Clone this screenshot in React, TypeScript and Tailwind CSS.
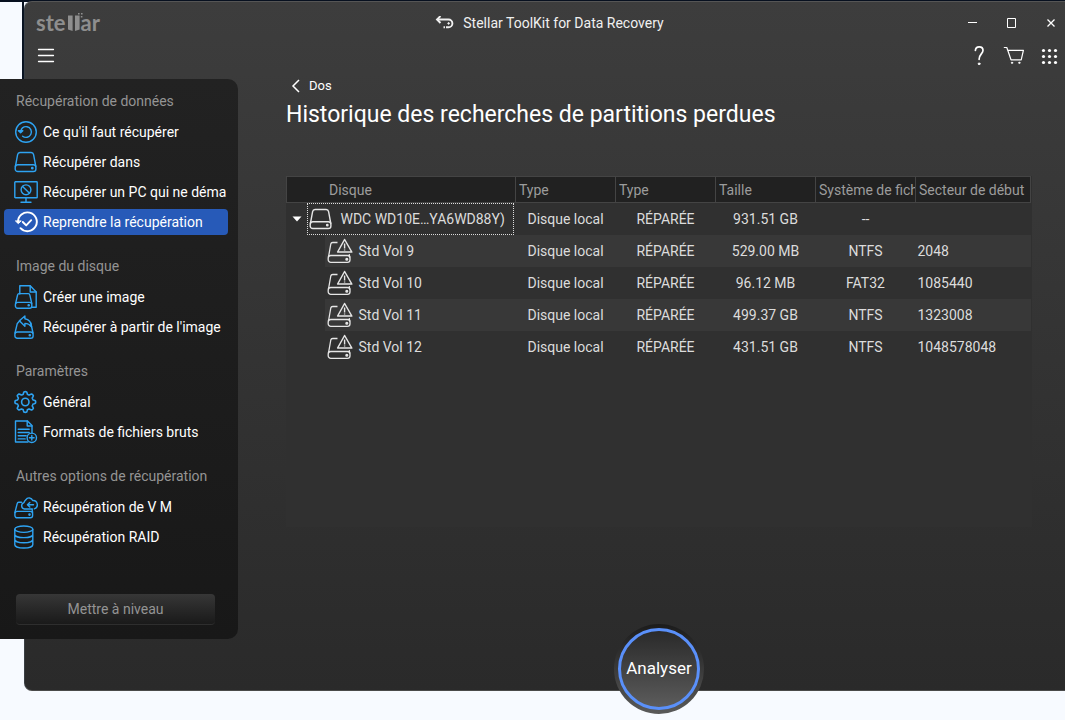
import React from "react";

type IconProps = { children: React.ReactNode; className?: string };

function Icon({ children, className = "text-[#2ea3f2]" }: IconProps) {
  return (
    <svg
      viewBox="0 0 24 24"
      className={`size-6 shrink-0 ${className}`}
      fill="none"
      stroke="currentColor"
      strokeWidth="1.4"
      strokeLinecap="round"
      strokeLinejoin="round"
      aria-hidden="true"
    >
      {children}
    </svg>
  );
}

const RestoreIcon = () => (
  <Icon>
    <circle cx="12" cy="12" r="10.3" />
    <path d="M6.6 12.2a5.4 5.4 0 1 1 2 4" />
    <path d="M4.4 10.8l2.2 2 2.2-2z" fill="currentColor" />
  </Icon>
);

const DriveIcon = ({ className }: { className?: string }) => (
  <Icon className={className}>
    <path d="M1.4 16.500L3.600 4.600Q4 2.500 6 2.500h11.200Q19.200 2.500 19.600 4.600L21.800 16.500" />
    <rect x="1.200" y="14.800" width="20.700" height="6.700" rx="2.600" />
    <circle cx="18.300" cy="18.200" r="0.700" fill="currentColor" />
  </Icon>
);

const MonitorIcon = () => (
  <Icon>
    <rect x="0.8" y="1.8" width="22.4" height="16" rx="0.6" />
    <circle cx="12" cy="9.800" r="4.900" />
    <path d="M8.600 6.400l6.900 6.900M12 17.800v4M7 22.200h10" />
  </Icon>
);

const ResumeIcon = () => (
  <Icon className="text-white">
    <g strokeWidth="1.9">
      <path d="M4 12.200a9.400 9.400 0 1 1 2.500 6" />
      <path d="M8.800 12l3.400 3.400 5-5.200" />
      <path d="M1.700 11.200l2.600 2.400 2.600-2.400z" fill="currentColor" strokeWidth="1" />
    </g>
  </Icon>
);

const CreateImageIcon = () => (
  <Icon>
    <path d="M5.800 9V0.800h10.400l6 6.200v15.200h-4.400" />
    <path d="M16.200 1v6h6" />
    <path d="M1.600 18.500L3.600 9.800Q3.900 8.600 5 8.600h9.400Q15.500 8.600 15.800 9.800L17.800 18.500" />
    <rect x="1.400" y="17.400" width="16.400" height="5.800" rx="2.200" />
    <circle cx="14.700" cy="20.300" r="0.600" fill="currentColor" />
  </Icon>
);

const RestoreImageIcon = () => (
  <Icon>
    <path d="M6 5.600L3.300 8.400 1 18M16.800 8l2.200 10" />
    <rect x="0.900" y="17" width="18.200" height="6.200" rx="2.300" />
    <path d="M5.400 5.800L10.900 1v2.800c4 .6 6.300 3.400 6.600 8-1.700-2.200-3.800-3.300-6.600-3.400v2.800z" />
    <circle cx="15.800" cy="20.200" r="0.600" fill="currentColor" />
  </Icon>
);

// Outline of an eight-toothed gear with rounded teeth.
const gearOutline =
  Array.from({ length: 96 }, (_, i) => {
    const angle = (i / 96) * Math.PI * 2;
    const radius = 9.1 + 1.25 * Math.tanh(2.6 * Math.cos(8 * angle));
    const x = 11.3 + radius * Math.cos(angle);
    const y = 12 + radius * Math.sin(angle);
    return `${i === 0 ? "M" : "L"}${x.toFixed(2)} ${y.toFixed(2)}`;
  }).join("") + "Z";

const GearIcon = () => (
  <Icon>
    <circle cx="11.300" cy="12" r="3.700" strokeWidth="1.600" />
    <path d={gearOutline} strokeWidth="1.600" />
  </Icon>
);

const RawFormatsIcon = () => (
  <Icon>
    <path d="M14 22H1.500V1h12l4.500 4.600V13" />
    <path d="M13.200 1v5H18M4.200 9.300h11M4.200 12.500h11M4.200 15.700h8M4.200 18.900h7" />
    <circle cx="17.800" cy="17.800" r="4.700" />
    <path d="M17.800 15.500v4.600M15.500 17.800h4.600" />
  </Icon>
);

const VmIcon = () => (
  <Icon>
    <path d="M7.500 7.300H4.600Q3.500 7.300 3.200 8.600L.9 17.500M18 14.400l.6 2.800" />
    <rect x="0.900" y="16.400" width="17.700" height="6.400" rx="2.200" />
    <path d="M18.300 14H10.400a3.300 3.300 0 0 1-.4-6.400 4.300 4.300 0 0 1 1.800-2.800 3.800 3.800 0 0 1 6.900.8 4.200 4.200 0 0 1 1.600 8.200" />
    <path d="M19.500 9.800h-6M15.800 7.500l-2.400 2.300 2.400 2.300" />
    <circle cx="15.500" cy="19.600" r="0.600" fill="currentColor" />
  </Icon>
);

const RaidIcon = () => (
  <Icon>
    <ellipse cx="9.800" cy="4.200" rx="9" ry="3.200" />
    <path d="M.8 4.200v15.600c0 1.800 4 3.200 9 3.200s9-1.400 9-3.200V4.200M.8 9.400c0 1.800 4 3.200 9 3.200s9-1.400 9-3.200M.8 14.600c0 1.800 4 3.200 9 3.200s9-1.400 9-3.200" />
  </Icon>
);

const VolumeIcon = () => (
  <svg
    viewBox="0 0 26 26"
    className="size-[26px] shrink-0 text-[#e6e6e6]"
    fill="none"
    stroke="currentColor"
    strokeWidth="1.300"
    strokeLinejoin="round"
    aria-hidden="true"
  >
    <path d="M10.500 4.500H5.700Q4.100 4.500 3.800 6L1.500 19M22.200 16.200l.6 3.300" />
    <rect x="1.200" y="17.500" width="21.800" height="6.800" rx="2.600" />
    <path d="M17.600 1.500L24.800 14H10.600z" strokeWidth="1.500" />
    <path d="M17.600 5.500v5M17.600 11.500v1" strokeWidth="1.400" />
    <circle cx="19.800" cy="21.200" r="0.900" fill="currentColor" />
  </svg>
);

type Section = {
  title: string;
  items: { label: string; icon: React.ReactNode; active?: boolean }[];
};

const sections: Section[] = [
  {
    title: "Récupération de données",
    items: [
      { label: "Ce qu'il faut récupérer", icon: <RestoreIcon /> },
      { label: "Récupérer dans", icon: <DriveIcon /> },
      { label: "Récupérer un PC qui ne déma", icon: <MonitorIcon /> },
      { label: "Reprendre la récupération", icon: <ResumeIcon />, active: true },
    ],
  },
  {
    title: "Image du disque",
    items: [
      { label: "Créer une image", icon: <CreateImageIcon /> },
      { label: "Récupérer à partir de l'image", icon: <RestoreImageIcon /> },
    ],
  },
  {
    title: "Paramètres",
    items: [
      { label: "Général", icon: <GearIcon /> },
      { label: "Formats de fichiers bruts", icon: <RawFormatsIcon /> },
    ],
  },
  {
    title: "Autres options de récupération",
    items: [
      { label: "Récupération de V M", icon: <VmIcon /> },
      { label: "Récupération RAID", icon: <RaidIcon /> },
    ],
  },
];

const columns = ["Type", "Type", "Taille", "Système de fich", "Secteur de début"];

const volumes = [
  { name: "Std Vol 9", size: "529.00 MB", fs: "NTFS", sector: "2048" },
  { name: "Std Vol 10", size: "96.12 MB", fs: "FAT32", sector: "1085440" },
  { name: "Std Vol 11", size: "499.37 GB", fs: "NTFS", sector: "1323008" },
  { name: "Std Vol 12", size: "431.51 GB", fs: "NTFS", sector: "1048578048" },
];

function Logo() {
  return (
    <div
      role="img"
      aria-label="stellar"
      className="flex items-baseline justify-self-start font-['Lato',sans-serif] text-[22px] leading-6 font-bold text-[#8e8e8e]"
    >
      <span>ste</span>
      <svg viewBox="0 0 16 18" className="ml-px h-[18px] w-4" fill="currentColor" aria-hidden="true">
        <path d="M1 2.500h4.600V18L1 16.500zM8 2.500h4.600V16.500L8 18z" />
        <path d="M11 0h1.600v1.600H11zM14 0h1.600v1.600H14zM13.800 3h1.600v1.600h-1.600z" />
      </svg>
      <span className="-ml-[2px]">ar</span>
    </div>
  );
}

function TitleBar() {
  return (
    <header className="grid h-[42px] grid-cols-[1fr_auto_1fr] items-center pr-[2px] pl-[11px]">
      <Logo />
      <div className="flex items-center gap-[9px] text-sm text-[#f0f0f0]">
        <svg viewBox="0 0 19 14" className="h-[14px] w-[19px]" fill="none" stroke="currentColor" strokeWidth="1.900" aria-hidden="true">
          <path d="M2 3.500h11.500a3.900 3.900 0 0 1 0 7.800H11" />
          <path d="M5.500 0L2 3.500 5.500 7" />
          <circle cx="13.600" cy="7.400" r="0.800" fill="currentColor" strokeWidth="1" />
          <path d="M8.500 11.300h1.500" />
        </svg>
        <span>Stellar ToolKit for Data Recovery</span>
      </div>
      <div className="flex gap-[15px] justify-self-end text-white">
        <button type="button" aria-label="Réduire" className="grid size-6 place-items-center">
          <svg viewBox="0 0 10 10" className="size-[10px]" stroke="currentColor" aria-hidden="true"><path d="M0 4.500h9" /></svg>
        </button>
        <button type="button" aria-label="Agrandir" className="grid size-6 place-items-center">
          <svg viewBox="0 0 10 10" className="size-[10px]" fill="none" stroke="currentColor" aria-hidden="true"><path d="M.5.500h8v9h-8z" /></svg>
        </button>
        <button type="button" aria-label="Fermer" className="grid size-6 place-items-center">
          <svg viewBox="0 0 10 10" className="size-[10px]" stroke="currentColor" strokeWidth="1.300" aria-hidden="true"><path d="M1.500 1.500l7 7M8.500 1.500l-7 7" /></svg>
        </button>
      </div>
    </header>
  );
}

function Toolbar() {
  return (
    <div className="flex h-6 items-center justify-between pr-1 pl-[9px] text-white">
      <button type="button" aria-label="Menu" className="size-6">
        <Icon className="text-white"><path d="M4.500 5.500h15M4.500 11.500h15M4.500 17.500h15" strokeWidth="1.300" /></Icon>
      </button>
      <div className="flex gap-[11px]">
        <button type="button" aria-label="Aide" className="size-6">
          <Icon className="text-white">
            <path d="M8.400 6.400c.2-2.400 1.700-3.600 3.800-3.600s3.800 1.300 3.800 3.500c0 3.500-3.900 3.900-3.900 9" strokeWidth="1.700" />
            <circle cx="12.100" cy="19.800" r="0.900" fill="currentColor" strokeWidth="1" />
          </Icon>
        </button>
        <button type="button" aria-label="Panier" className="size-6">
          <Icon className="text-white">
            <path d="M2.300 3.500h2.500l4.200 12.300h10.200l2.200-9.500H5.800" strokeWidth="1.200" />
            <circle cx="10" cy="18.800" r="0.700" fill="currentColor" strokeWidth="0.800" />
            <circle cx="17.300" cy="18.800" r="0.700" fill="currentColor" strokeWidth="0.800" />
          </Icon>
        </button>
        <button type="button" aria-label="Applications" className="size-6">
          <svg viewBox="0 0 24 24" className="size-6" fill="currentColor" aria-hidden="true">
            {[6.5, 12.5, 18.5].map((y) =>
              [6.5, 12.5, 18.5].map((x) => <circle key={`${x}-${y}`} cx={x} cy={y} r="1.600" />)
            )}
          </svg>
        </button>
      </div>
    </div>
  );
}

function Sidebar() {
  return (
    <aside className="-ml-[25px] flex w-[238px] shrink-0 flex-col self-start rounded-r-[10px] bg-linear-to-b from-[#222222] to-[#181818] pt-[6px] pb-[14px]">
      <nav className="flex flex-col gap-[13px]">
        {sections.map((section) => (
          <section key={section.title}>
            <h2 className="pl-4 text-sm leading-8 text-[#949494]">{section.title}</h2>
            <ul className="pr-[10px] pl-1">
              {section.items.map((item) => (
                <li key={item.label} className="py-[2px]">
                  <a
                    href="#"
                    className={
                      item.active
                        ? "flex h-[26px] items-center gap-[5px] rounded bg-[#275ab8] pl-[10px] text-sm whitespace-nowrap text-white"
                        : "flex h-[26px] items-center gap-[5px] rounded pl-[10px] text-sm whitespace-nowrap text-white"
                    }
                  >
                    {item.icon}
                    <span>{item.label}</span>
                  </a>
                </li>
              ))}
            </ul>
          </section>
        ))}
      </nav>
      <button
        type="button"
        className="mt-[42px] mr-[23px] ml-4 h-[31px] rounded border-b border-[#2e2e2e] bg-linear-to-b from-[#373737] to-[#1a1a1a] text-sm text-[#949494]"
      >
        Mettre à niveau
      </button>
    </aside>
  );
}

function PartitionTable() {
  return (
    <table className="w-full table-fixed border-collapse text-sm text-[#dcdcdc]">
      <colgroup>
        <col />
        <col className="w-[100px]" />
        <col className="w-[100px]" />
        <col className="w-[100px]" />
        <col className="w-[100px]" />
        <col className="w-[115px]" />
      </colgroup>
      <thead>
        <tr className="h-[26px] bg-[#212121] text-left text-[#9c9c9c]">
          <th className="border border-[#444444] p-0 pl-[42px] font-normal">Disque</th>
          {columns.map((label, i) => (
            <th key={i} className="border border-[#444444] p-0 pl-[3px] font-normal">
              <span className="block overflow-hidden whitespace-nowrap">{label}</span>
            </th>
          ))}
        </tr>
      </thead>
      <tbody>
        <tr className="h-8 text-center">
          <td className="p-0">
            <div className="flex items-center pr-[2px]">
              <button type="button" aria-label="Replier" className="grid h-8 w-5 place-items-center">
                <svg viewBox="0 0 10 6" className="h-[6px] w-[10px]" fill="white" aria-hidden="true"><path d="M.5.500h9L5 5.500z" /></svg>
              </button>
              <div className="flex h-8 flex-1 items-center gap-2 border border-dotted border-[#dcdcdc] pl-px whitespace-nowrap">
                <DriveIcon className="text-[#e6e6e6]" />
                WDC WD10E…YA6WD88Y)
              </div>
            </div>
          </td>
          <td className="p-0">Disque local</td>
          <td className="p-0">RÉPARÉE</td>
          <td className="p-0">931.51 GB</td>
          <td className="p-0">--</td>
          <td className="p-0" />
        </tr>
        {volumes.map((v, i) => {
          const cell = i % 2 === 0 ? "bg-[#383838] p-0" : "p-0";
          return (
            <tr key={v.name} className="h-8 text-center">
              <td className="p-0 pl-[38px]">
                <div className={i % 2 === 0 ? "flex h-8 items-center gap-[6px] bg-[#383838] pl-[2px]" : "flex h-8 items-center gap-[6px] pl-[2px]"}>
                  <VolumeIcon />
                  {v.name}
                </div>
              </td>
              <td className={cell}>Disque local</td>
              <td className={cell}>RÉPARÉE</td>
              <td className={cell}>{v.size}</td>
              <td className={cell}>{v.fs}</td>
              <td className={i % 2 === 0 ? "bg-[#383838] p-0 pl-[2px] text-left" : "p-0 pl-[2px] text-left"}>{v.sector}</td>
            </tr>
          );
        })}
      </tbody>
    </table>
  );
}

export default function App() {
  return (
    <div className="flex min-h-screen flex-col border-t-2 border-[#07101f] bg-[#f7faff] pb-[29px] font-['Roboto',sans-serif]">
      <div className="ml-[22px] flex flex-1">
        <div className="h-[78px] w-[2px] shrink-0 bg-[#0a1422]" />
        <div className="-mt-px flex min-w-0 flex-1 flex-col rounded-l-lg border-t border-b border-l border-t-[#555555] border-b-[#4a4a4a] border-l-[#3a3f44] bg-linear-to-b from-[#3d3d3d] to-[#2a2a2a]">
          <TitleBar />
          <Toolbar />
          <div className="mt-[11px] flex flex-1">
            <Sidebar />
            <main className="flex min-w-0 flex-1 flex-col pr-[33px] pl-12">
              <a href="#" className="flex h-[14px] items-center gap-[9px] self-start pl-[5px] text-[13px] leading-[14px] text-white">
                <svg viewBox="0 0 9 14" className="h-[14px] w-[9px]" fill="none" stroke="currentColor" strokeWidth="1.500" aria-hidden="true">
                  <path d="M8 1L2 7l6 6" />
                </svg>
                Dos
              </a>
              <h1 className="mt-1 text-[23px] leading-9 text-white">Historique des recherches de partitions perdues</h1>
              <div className="mt-[43px] mb-[97px] flex-1 bg-[#303030] pr-px">
                <PartitionTable />
              </div>
              <div className="z-10 -mb-6 flex justify-center">
                <button
                  type="button"
                  className="grid size-[90px] place-items-center rounded-full bg-linear-to-b from-[#1c1c1c] to-[#5a5a5a]"
                >
                  <span className="grid size-[82px] place-items-center rounded-full border-3 border-[#5a90fa] bg-linear-to-b from-[#2a2a2a] to-[#5c5c5c] text-[17px] text-white">
                    Analyser
                  </span>
                </button>
              </div>
            </main>
          </div>
        </div>
      </div>
    </div>
  );
}
